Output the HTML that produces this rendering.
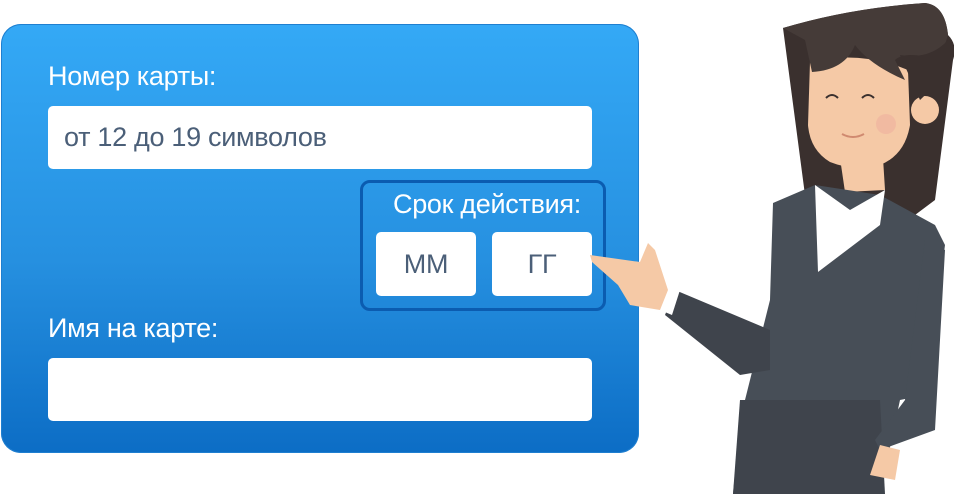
<!DOCTYPE html>
<html><head><meta charset="utf-8"><style>
body{margin:0;width:954px;height:494px;background:#fff;position:relative;overflow:hidden;font-family:"Liberation Sans",sans-serif}
.card{position:absolute;left:1px;top:24px;width:638px;height:429px;border-radius:20px;background:linear-gradient(#34a9f6,#2690e0 55%,#0c6dc5);box-shadow:inset 0 0 0 1px #1f7fd0}
.lbl{position:absolute;color:#fff;font-size:27px;letter-spacing:-0.3px}
.fld{position:absolute;background:#fff;border-radius:5px;color:#4b5f78;font-size:27px;letter-spacing:-0.3px}
.exp{position:absolute;left:360px;top:180px;width:240px;height:125px;border:3px solid #0b5cb0;border-radius:10px}
</style></head><body>
<div class="card"></div>
<div class="lbl" style="left:48px;top:61px">Номер карты:</div>
<div class="fld" style="left:48px;top:106px;width:544px;height:63px;line-height:63px;padding-left:16px;box-sizing:border-box">от 12 до 19 символов</div>
<div class="exp"></div>
<div class="lbl" style="left:393px;top:189px">Срок действия:</div>
<div class="fld" style="left:376px;top:232px;width:100px;height:64px;line-height:64px;text-align:center">ММ</div>
<div class="fld" style="left:492px;top:232px;width:100px;height:64px;line-height:64px;text-align:center">ГГ</div>
<div class="lbl" style="left:48px;top:313px">Имя на карте:</div>
<div class="fld" style="left:48px;top:358px;width:544px;height:63px"></div>
<svg width="954" height="494" style="position:absolute;left:0;top:0">
<path d="M783,28 Q850,8 925,3 Q945,5 948,35 Q958,45 953,60 L935,200 L915,215 L805,195 Z" fill="#3a302e"/>
<path d="M810,62 Q860,50 908,70 L910,125 Q905,155 880,165 Q855,172 830,162 Q810,150 808,125 Z" fill="#f5c9a6"/>
<circle cx="925" cy="110" r="14" fill="#f5c9a6"/>
<path d="M840,158 L883,158 L885,190 L845,192 Z" fill="#f5c9a6"/>
<path d="M783,28 Q850,8 925,3 Q945,5 948,35 L940,60 Q905,50 895,60 L905,80 Q870,65 855,45 Q845,70 812,72 L805,40 Z" fill="#453b38"/>
<path d="M900,55 Q930,60 948,40 L946,75 L920,100 L912,82 Z" fill="#3a302e"/>
<path d="M826,98 Q832,92 838,98 M862,98 Q868,92 874,98" stroke="#3a302e" stroke-width="2" fill="none"/>
<path d="M842,134 Q853,140 864,134" stroke="#d08a70" stroke-width="2" fill="none"/>
<circle cx="886" cy="124" r="10" fill="#f0b3a0" opacity=".7"/>
<path d="M773,203 L815,185 L880,195 L935,225 L945,245 L925,395 L900,400 L880,494 L733,494 L740,420 L770,300 Z" fill="#474e57"/>
<path d="M815,185 L850,210 L885,190 L880,225 L818,272 Z" fill="#fff"/>
<path d="M740,400 L880,400 L885,494 L733,494 Z" fill="#3f444c"/>
<path d="M925,240 L945,250 L935,430 L880,450 L875,440 L905,400 Z" fill="#474e57"/>
<path d="M880,445 L900,450 L895,480 L870,475 Z" fill="#f5c9a6"/>
<path d="M675,290 L770,330 L770,370 L740,375 L665,315 Z" fill="#3f444c"/>
<path d="M665,283 L680,290 L672,315 L660,310 Z" fill="#fff"/>
<path d="M590,255 L640,262 L648,243 L655,250 L668,290 L660,310 L630,305 L618,285 L592,262 Z" fill="#f5c9a6"/>
</svg>
</body></html>
